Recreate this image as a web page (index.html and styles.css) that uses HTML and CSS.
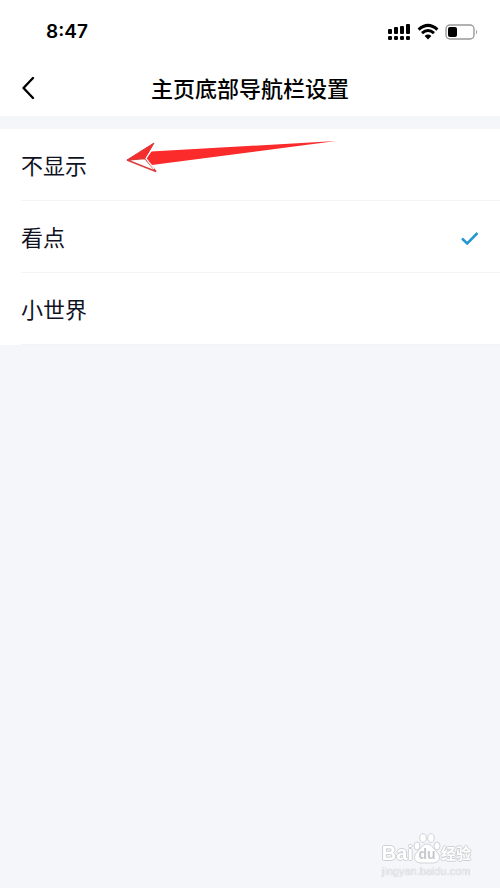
FILE: index.html
```html
<!DOCTYPE html>
<html lang="zh-CN">
<head>
<meta charset="utf-8">
<meta name="viewport" content="width=device-width, initial-scale=1">
<title>主页底部导航栏设置</title>
<link rel="stylesheet" href="styles.css">
</head>
<body>
<header class="top">
  <div class="status">
    <time class="clock">8:47</time>
    <div class="indicators">
      <svg width="23" height="18" viewBox="0 0 23 18" aria-hidden="true">
        <rect x="0" y="6" width="4" height="5" rx="1"/><rect x="6" y="4" width="4" height="7" rx="1"/><rect x="12" y="3" width="4" height="8" rx="1"/><rect x="18" y="1" width="4" height="10" rx="1"/>
        <rect x="0" y="13" width="4" height="4" rx="1.2"/><rect x="6" y="13" width="4" height="4" rx="1.2"/><rect x="12" y="13" width="4" height="4" rx="1.2"/><rect x="18" y="13" width="4" height="4" rx="1.2"/>
      </svg>
      <svg width="22" height="18" viewBox="0 0 22 18" aria-hidden="true">
        <path d="M1.6 6.6Q11-1.8 20.4 6.6M5 10.2Q11 4.8 17 10.2" fill="none" stroke="#000" stroke-width="3"/>
        <path d="M7.6 12.9Q11 10.2 14.4 12.9L11 16.4Z"/>
      </svg>
      <svg width="33" height="18" viewBox="0 0 33 18" aria-hidden="true">
        <rect x="1" y="2" width="28" height="14" rx="4" fill="#fff" stroke="#999" stroke-width="1.4"/>
        <rect x="3" y="4" width="9" height="10" rx="2"/>
        <path d="M31 6.5Q33 9 31 11.5Z" fill="#999"/>
      </svg>
    </div>
  </div>
  <div class="nav">
    <button class="back" type="button" aria-label="返回">
      <svg width="14" height="24" viewBox="0 0 14 24"><path d="M12 2L2.5 12L12 22" fill="none" stroke="#000" stroke-width="2.4" stroke-linecap="round" stroke-linejoin="round"/></svg>
    </button>
    <h1 class="title">主页底部导航栏设置</h1>
  </div>
</header>
<main class="options">
  <label class="option"><input class="radio" type="radio" name="tab"><span class="name">不显示</span></label>
  <label class="option"><input class="radio" type="radio" name="tab" checked><span class="name">看点</span>
    <svg class="tick" width="20" height="20" viewBox="0 0 20 20" aria-hidden="true"><path d="M2 12.5L7.2 17.5L17.5 7" fill="none" stroke="#2497d3" stroke-width="2.5"/></svg>
  </label>
  <label class="option"><input class="radio" type="radio" name="tab"><span class="name">小世界</span></label>
  <svg class="arrow" width="212" height="36" viewBox="0 0 212 36" aria-hidden="true">
    <path d="M26 11.5L211 1L27 25L21 18Z" fill="#fb2b2b"/>
    <path d="M2 20L29 3L20 18.5Z" fill="#f52d2d" stroke="#d93636"/>
    <path d="M2 20L20 18.5L31 31.5Z" fill="#fff" stroke="#dd3b3b" stroke-width="1.5"/>
    <path d="M27.5 9L21 18.5L29 29" fill="none" stroke="#fff" stroke-width="1.2"/>
  </svg>
</main>
<footer class="mark">
  <div class="brand"><span>Bai</span>
    <span class="paw"><svg width="28" height="31" viewBox="0 0 28 31" aria-hidden="true">
      <g fill="#fff" stroke="#d0d1d5"><ellipse cx="4" cy="13" rx="3" ry="4"/><ellipse cx="10" cy="5" rx="3.3" ry="4.3"/><ellipse cx="18" cy="5" rx="3.3" ry="4.3"/><ellipse cx="24" cy="13" rx="3" ry="4"/><path d="M14 11C9 11 8 16 4 19C-1 24 2 30 8 30L20 30C26 30 29 24 24 19C20 16 19 11 14 11Z"/></g>
    </svg><span class="du">du</span></span>
    <span class="cn">经验</span></div>
  <div class="site">jingyan.baidu.com</div>
</footer>
</body>
</html>
```
FILE: styles.css
```css
* { box-sizing: border-box; }
body {
  margin: 0;
  min-height: 100vh;
  background: #f4f6fa;
  color: #10131f;
  font-family: "Noto Sans CJK SC", sans-serif;
}
.top { background: #fff; color: #000; }
.status {
  display: flex;
  align-items: center;
  justify-content: space-between;
  height: 64px;
  padding: 0 22px 0 46px;
}
.clock { font: 600 19px/24px Inter, sans-serif; }
.indicators { display: flex; gap: 6px; }
.nav {
  display: grid;
  grid-template-columns: 44px 1fr 44px;
  align-items: center;
  height: 52px;
  padding-bottom: 4px;
}
.back {
  display: flex;
  height: 44px;
  padding: 0 0 0 21px;
  align-items: center;
  border: 0;
  background: none;
}
.title {
  margin: 0;
  padding-bottom: 2px;
  text-align: center;
  font-size: 22px;
  line-height: 32px;
  font-weight: 500;
}
.options { position: relative; margin-top: 13px; background: #fff; }
.option {
  display: flex;
  align-items: center;
  justify-content: space-between;
  height: 72px;
  margin-left: 21px;
  padding: 0 20px 2px 0;
  border-bottom: 1px solid #f3f4f6;
  font-size: 22px;
}
.radio { position: absolute; opacity: 0; }
.arrow { position: absolute; left: 125px; top: 11px; pointer-events: none; }
.mark {
  position: fixed;
  right: 29px;
  bottom: 10px;
  color: #fff;
  text-shadow: 1px 0 #d0d1d5, -1px 0 #d0d1d5, 0 1px #d0d1d5, 0 -1px #d0d1d5;
}
.brand {
  display: flex;
  align-items: flex-end;
  font: 700 20px/22px "Liberation Sans", sans-serif;
}
.paw { display: grid; place-items: end center; }
.paw > * { grid-area: 1 / 1; }
.du { color: #c6c8cd; font-size: 14px; line-height: 20px; text-shadow: none; }
.cn { font-family: "Noto Sans CJK SC", sans-serif; font-size: 15px; }
.site {
  color: #e9ebef;
  font: 11px/14px "Liberation Sans", sans-serif;
  text-shadow: 0 0 1px #b4b6ba;
}
```
